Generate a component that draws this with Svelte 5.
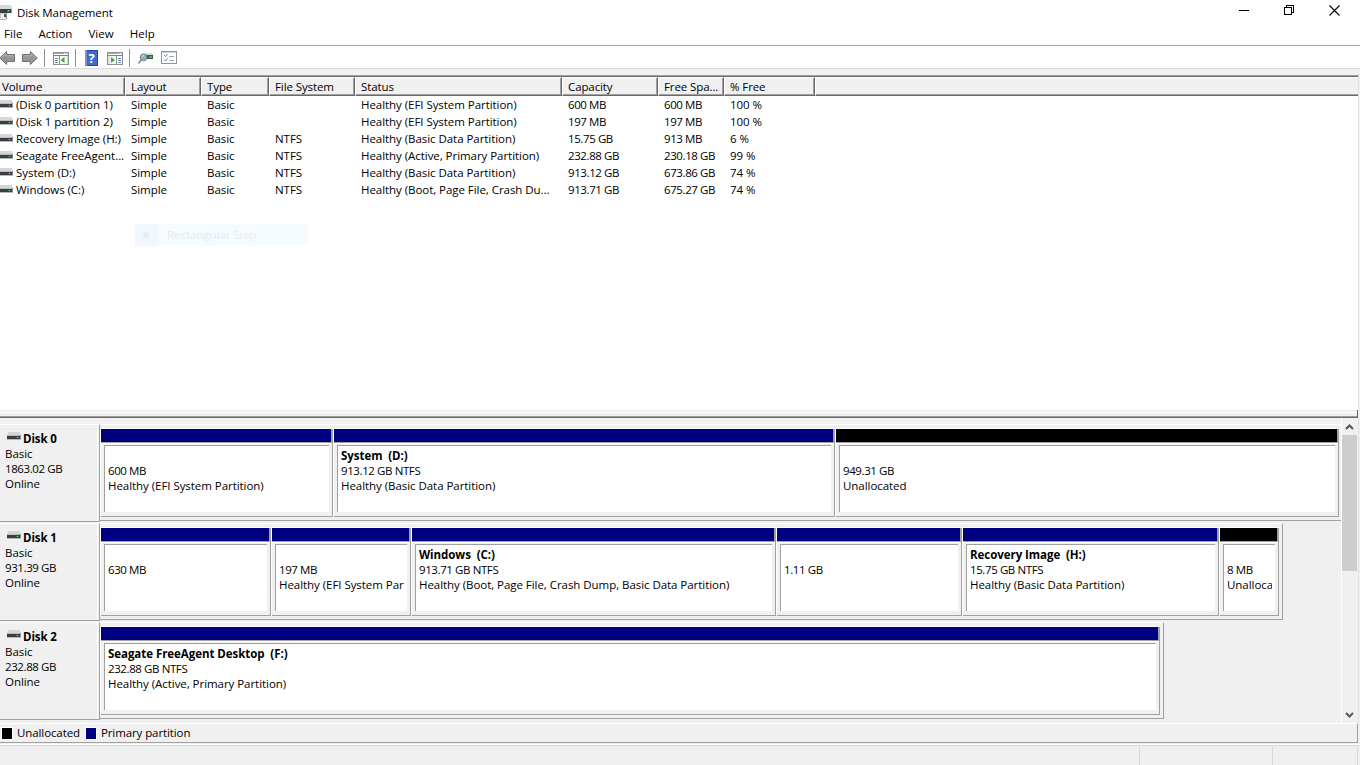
<script lang="ts">
	interface Partition {
		width: number;
		name?: string;
		size: string;
		status?: string;
		unallocated?: boolean;
	}

	interface Disk {
		name: string;
		size: string;
		full?: boolean;
		partitions: Partition[];
	}

	const menus = ['File', 'Action', 'View', 'Help'];

	const columns = ['Volume', 'Layout', 'Type', 'File System', 'Status', 'Capacity', 'Free Spa...', '% Free', ''];

	const volumes = [
		['(Disk 0 partition 1)', 'Simple', 'Basic', '', 'Healthy (EFI System Partition)', '600 MB', '600 MB', '100 %'],
		['(Disk 1 partition 2)', 'Simple', 'Basic', '', 'Healthy (EFI System Partition)', '197 MB', '197 MB', '100 %'],
		['Recovery Image (H:)', 'Simple', 'Basic', 'NTFS', 'Healthy (Basic Data Partition)', '15.75 GB', '913 MB', '6 %'],
		['Seagate FreeAgent...', 'Simple', 'Basic', 'NTFS', 'Healthy (Active, Primary Partition)', '232.88 GB', '230.18 GB', '99 %'],
		['System (D:)', 'Simple', 'Basic', 'NTFS', 'Healthy (Basic Data Partition)', '913.12 GB', '673.86 GB', '74 %'],
		['Windows (C:)', 'Simple', 'Basic', 'NTFS', 'Healthy (Boot, Page File, Crash Du...', '913.71 GB', '675.27 GB', '74 %']
	];

	const disks: Disk[] = [
		{
			name: 'Disk 0',
			size: '1863.02 GB',
			full: true,
			partitions: [
				{ width: 233, size: '600 MB', status: 'Healthy (EFI System Partition)' },
				{ width: 502, name: 'System  (D:)', size: '913.12 GB NTFS', status: 'Healthy (Basic Data Partition)' },
				{ width: 504, size: '949.31 GB', status: 'Unallocated', unallocated: true }
			]
		},
		{
			name: 'Disk 1',
			size: '931.39 GB',
			partitions: [
				{ width: 171, size: '630 MB' },
				{ width: 140, size: '197 MB', status: 'Healthy (EFI System Partition)' },
				{ width: 365, name: 'Windows  (C:)', size: '913.71 GB NTFS', status: 'Healthy (Boot, Page File, Crash Dump, Basic Data Partition)' },
				{ width: 186, size: '1.11 GB' },
				{ width: 257, name: 'Recovery Image  (H:)', size: '15.75 GB NTFS', status: 'Healthy (Basic Data Partition)' },
				{ width: 60, size: '8 MB', status: 'Unallocated', unallocated: true }
			]
		},
		{
			name: 'Disk 2',
			size: '232.88 GB',
			partitions: [
				{ width: 1060, name: 'Seagate FreeAgent Desktop  (F:)', size: '232.88 GB NTFS', status: 'Healthy (Active, Primary Partition)' }
			]
		}
	];
</script>

{#snippet driveIcon()}
	<svg class="drive" width="14" height="8" viewBox="0 0 14 8" shape-rendering="crispEdges">
		<path d="M1 0h12l1 4H0z" fill="#d3d6da" />
		<rect y="3" width="14" height="1" fill="#b9bcc0" />
		<rect y="4" width="14" height="3" fill="#3b3d40" />
		<rect x="13" y="3" width="1" height="4" fill="#8b8e91" />
		<rect y="7" width="14" height="1" fill="#b5b7b9" />
		<rect x="9" y="5" width="3" height="1" fill="#2b7d31" />
		<rect x="10" y="5" width="1" height="1" fill="#3dfb48" />
	</svg>
{/snippet}

<div class="window">
	<header class="titlebar">
		<svg class="app-icon" width="12" height="16" viewBox="0 0 12 16" shape-rendering="crispEdges">
			<path d="M0 1h11l1 4H0z" fill="#d3d6da" />
			<rect y="5" width="12" height="4" fill="#3b3d40" />
			<rect x="11" y="5" width="1" height="4" fill="#8b8e91" />
			<rect x="7" y="6" width="3" height="2" fill="#2b8d31" />
			<rect x="8" y="6" width="1" height="1" fill="#3dfb48" />
			<rect x="0" y="9" width="7" height="5" fill="#c6c6c6" />
			<rect x="1" y="10" width="4" height="5" fill="#efefef" />
			<rect x="4" y="10" width="2" height="3" fill="#555" />
			<rect x="6" y="9" width="1" height="6" fill="#8b8b8b" />
			<rect x="0" y="15" width="6" height="1" fill="#b0b0b0" />
		</svg>
		<span class="title">Disk Management</span>
		<div class="controls">
			<svg width="11" height="11" viewBox="0 0 11 11" shape-rendering="crispEdges">
				<path d="M0 5.5h10" stroke="#000" />
			</svg>
			<svg width="11" height="11" viewBox="0 0 11 11" shape-rendering="crispEdges">
				<path d="M.5 2.5h7v7h-7zM2.5 2.5v-2h7v7h-2" fill="none" stroke="#000" />
			</svg>
			<svg width="11" height="11" viewBox="0 0 11 11">
				<path d="M.5 .5l10 10M10.5 .5l-10 10" stroke="#000" stroke-width="1.1" />
			</svg>
		</div>
	</header>

	<nav class="menubar">
		{#each menus as menu}
			<span>{menu}</span>
		{/each}
	</nav>

	<div class="toolbar">
		<svg class="back" width="17" height="16" viewBox="0 0 17 16">
			<path d="M.7 8l7-6.500v3h7.800v7H7.700v3z" fill="#959595" stroke="#707070" />
			<path d="M2.500 7.500l4-3.700v2h8" fill="none" stroke="#b4b4b4" />
		</svg>
		<svg class="forward" width="17" height="16" viewBox="0 0 17 16">
			<path d="M16.300 8l-7-6.500v3H1.500v7h7.800v3z" fill="#959595" stroke="#707070" />
			<path d="M2.500 5.800h8v-2L14.500 7.500" fill="none" stroke="#b4b4b4" />
		</svg>
		<i class="sep"></i>
		<svg class="tree" width="16" height="16" viewBox="0 0 16 16" shape-rendering="crispEdges">
			<rect x=".5" y="2.500" width="15" height="12" fill="#fafafa" stroke="#8c9299" />
			<path d="M1 3.500h14" stroke="#9ea8b3" />
			<path d="M11 3.500h1M13 3.500h1" stroke="#fff" />
			<path d="M1 5.500h14" stroke="#7a838c" />
			<path d="M6.500 6v8" stroke="#8c9299" />
			<path d="M2 8.500h3M2 10.500h3M2 12.500h3" stroke="#6c8db2" />
			<rect x="14" y="6" width="1" height="8" fill="#ccd0d4" />
			<path d="M11.500 7v6l-4-3z" fill="#3fae2a" shape-rendering="auto" />
		</svg>
		<i class="sep second"></i>
		<svg class="help" width="13" height="16" viewBox="0 0 13 16">
			<rect width="13" height="16" fill="#2546a0" />
			<rect x="2" y="1" width="10" height="14" fill="#4169cc" />
			<rect x="0" y="0" width="2" height="16" fill="#7892d0" />
			<text x="3.500" y="13" class="question">?</text>
		</svg>
		<svg class="action" width="16" height="16" viewBox="0 0 16 16" shape-rendering="crispEdges">
			<rect x=".5" y="2.500" width="15" height="12" fill="#fafafa" stroke="#8c9299" />
			<path d="M1 3.500h14" stroke="#9ea8b3" />
			<path d="M11 3.500h1M13 3.500h1" stroke="#fff" />
			<path d="M1 5.500h14" stroke="#7a838c" />
			<path d="M9.500 6v8" stroke="#8c9299" />
			<path d="M11 8.500h3M11 10.500h3M11 12.500h3" stroke="#6c8db2" />
			<rect x="1" y="6" width="2" height="8" fill="#dfe2e5" />
			<path d="M4 7v6l4-3z" fill="#3fae2a" shape-rendering="auto" />
		</svg>
		<i class="sep third"></i>
		<svg class="rescan" width="16" height="14" viewBox="0 0 16 14">
			<path d="M4 2h10l1 2H3z" fill="#d5d8dc" />
			<rect x="6" y="4" width="9" height="4" fill="#4b4e52" />
			<rect x="11" y="5" width="3" height="2" fill="#16d321" />
			<path d="M3.500 8.500l-3 4" stroke="#8a8f94" stroke-width="1.700" />
			<circle cx="5.500" cy="6.500" r="3.300" fill="#8fb0c5" stroke="#6f8795" />
			<path d="M4 6a2 2 0 012-1.500" fill="none" stroke="#d5e8f2" />
		</svg>
		<svg class="settings" width="16" height="13" viewBox="0 0 16 13" shape-rendering="crispEdges">
			<rect x=".5" y=".5" width="15" height="12" fill="#fff" stroke="#8f959b" />
			<path d="M1 1.500h14" stroke="#d2d5d8" />
			<path d="M8 5.500h5M8 9.500h5" stroke="#a5a9ad" />
			<path d="M3 4l1.500 1.500L6.500 3M3 8.500L4.500 10l2-2.500" fill="none" stroke="#3795dc" shape-rendering="auto" />
		</svg>
	</div>

	<div class="gap"></div>

	<section class="volumes">
		<div class="row head">
			{#each columns as column}
				<div class="th">{column}</div>
			{/each}
		</div>
		{#each volumes as volume}
			<div class="row">
				{#each volume as value, i}
					<div class="td" class:num={i > 4} class:percent={i === 7}>
						{#if i === 0}{@render driveIcon()}{/if}<span>{value}</span>
					</div>
				{/each}
			</div>
		{/each}
		<div class="snip"><i></i><span>Rectangular Snip</span></div>
	</section>

	<div class="splitter"></div>

	<section class="graph">
		<div class="disks">
			{#each disks as disk}
				<div class="disk" class:full={disk.full}>
					<div class="label">
						<div class="disk-name">{@render driveIcon()}<b>{disk.name}</b></div>
						<div>Basic</div>
						<div class="num">{disk.size}</div>
						<div>Online</div>
					</div>
					<div class="frame">
						{#each disk.partitions as part}
							<div class="part" class:unallocated={part.unallocated} style="width: {part.width}px">
								<div class="bar"></div>
								<div class="body">
									<div class="box">
										<b>{part.name ?? ''}</b>
										<div class="num">{part.size}</div>
										<div>{part.status ?? ''}</div>
									</div>
								</div>
							</div>
						{/each}
					</div>
				</div>
			{/each}
		</div>
		<div class="scrollbar">
			<svg width="9" height="6" viewBox="0 0 9 6"><path d="M1 5l3.500-3.500L8 5" /></svg>
			<div class="thumb"></div>
			<svg width="9" height="6" viewBox="0 0 9 6"><path d="M1 1l3.500 3.500L8 1" /></svg>
		</div>
	</section>

	<div class="legend">
		<i class="black"></i><span>Unallocated</span>
		<i></i><span>Primary partition</span>
	</div>

	<footer class="statusbar">
		<div></div>
		<div></div>
		<div></div>
	</footer>
</div>

<style>
	:global(body) {
		margin: 0;
		overflow: hidden;
	}

	.window {
		display: flex;
		flex-direction: column;
		width: 1360px;
		height: 765px;
		overflow: hidden;
		background: #f0f0f0;
		color: #000;
		font: 11.5px/15px 'Open Sans', 'Noto Sans', sans-serif;
		letter-spacing: -0.05px;
		white-space: nowrap;
	}

	svg {
		display: block;
		flex-shrink: 0;
	}

	.num {
		letter-spacing: -0.4px;
	}

	.percent {
		letter-spacing: -0.05px;
	}

	.titlebar {
		display: flex;
		align-items: center;
		height: 24px;
		background: #fff;
	}

	.title {
		margin-left: 5px;
		letter-spacing: -0.08px;
	}

	.controls {
		display: flex;
		gap: 34px;
		margin: -3px 20px 0 auto;
	}

	.menubar {
		display: flex;
		gap: 16px;
		height: 21px;
		padding-left: 4px;
		line-height: 20px;
		letter-spacing: 0.05px;
		background: #fff;
		border-bottom: 1px solid #a8a8ac;
	}

	.toolbar {
		display: flex;
		align-items: center;
		height: 22px;
		background: #fff;
		border-bottom: 1px solid #d9d9d9;
	}

	.toolbar svg {
		margin-top: 2px;
	}

	.sep {
		width: 1px;
		height: 18px;
		margin: 2px 8px 0 6px;
		background: #8d8d8d;
	}

	.toolbar .back {
		margin-left: -1px;
	}

	.forward {
		margin-left: 5px;
	}

	.toolbar .action {
		margin-left: 9px;
	}

	.sep.second {
		margin-right: 9px;
	}

	.question {
		font: bold 13px 'Open Sans', sans-serif;
		fill: #fff;
	}

	.toolbar .settings {
		margin: 0 0 0 7px;
	}

	.gap {
		height: 6px;
	}

	.volumes {
		position: relative;
		flex-shrink: 0;
		width: 1358px;
		height: 334px;
		border-top: 1px solid #a0a0a0;
		background: #fff;
		border-right: 1px solid #e3e3e3;
	}

	.row {
		display: grid;
		grid-template-columns: 125px 76px 68px 86px 207px 96px 66px 91px 1fr;
		height: 17px;
		line-height: 17px;
	}

	.row.head {
		height: 20px;
		box-sizing: border-box;
		border-top: 1px solid #696969;
		background: #f0f0f0;
		letter-spacing: -0.1px;
	}

	.th {
		padding-left: 5px;
		border: 1px solid #fff;
		border-right-color: #696969;
		border-bottom-color: #696969;
		box-shadow: inset -1px -1px #a0a0a0;
	}

	.th:first-child {
		border-left: 0;
		padding-left: 2px;
	}

	.th:last-child {
		border-right: 0;
		box-shadow: inset 0 -1px #a0a0a0;
	}

	.td {
		display: flex;
		align-items: center;
		padding-left: 6px;
		overflow: hidden;
	}

	.td:first-child {
		gap: 3px;
		padding-left: 0;
	}

	.td:first-child .drive {
		align-self: flex-start;
		margin: 4px 0 0 -1px;
	}

	.snip {
		position: absolute;
		left: 135px;
		top: 148px;
		display: flex;
		align-items: center;
		width: 173px;
		height: 22px;
		line-height: 18px;
		background: linear-gradient(90deg, #f0f7ff 22px, #f7fbff 22px, #f7fbff 27px, #f5fbff 27px);
		color: #e9ebed;
	}

	.snip i {
		width: 6px;
		height: 6px;
		margin: 0 18px 0 8px;
		border-radius: 50%;
		background: #e9ebed;
	}

	.splitter {
		flex-shrink: 0;
		height: 8px;
		box-sizing: border-box;
		width: 1358px;
		border-bottom: 1px solid #696969;
		border-right: 1px solid #696969;
		background: linear-gradient(#f0f0f0 2px, #fff 2px, #fff 3px, #f0f0f0 3px, #f0f0f0 6px, #a0a0a0 6px);
	}

	.graph {
		display: flex;
		flex-shrink: 0;
		height: 305px;
		width: 1358px;
		border-right: 1px solid #e3e3e3;
	}

	.disks {
		width: 1341px;
		padding-top: 6px;
		box-sizing: border-box;
	}

	.disk {
		display: flex;
		height: 99px;
	}

	.label {
		width: 100px;
		height: 98px;
		box-sizing: border-box;
		padding: 6px 0 0 5px;
		border-top: 1px solid #fff;
		border-right: 1px solid #a0a0a0;
		border-bottom: 1px solid #a0a0a0;
		box-shadow: inset -1px 0 #f0f0f0, inset -2px 0 #fff;
	}

	.disk-name {
		display: flex;
		gap: 2px;
		padding-left: 2px;
	}

	.disk-name .drive {
		margin-top: 1px;
	}

	.frame {
		display: flex;
		height: 97px;
		box-sizing: border-box;
		padding: 4px 3px 3px 0;
		border: solid;
		border-width: 1px 1px 1px 0;
		border-color: #fff #a0a0a0 #a0a0a0;
	}

	.full .frame {
		width: 1241px;
		border-right: 0;
	}

	.part {
		display: flex;
		flex-direction: column;
		flex-shrink: 0;
		box-sizing: border-box;
		border-left: 1px solid #fff;
	}

	.bar {
		height: 13px;
		background: #000080;
		border-right: 2px solid #a0a0a0;
		box-shadow: 0 -1px #fff;
	}

	.unallocated .bar {
		background: #000;
	}

	.body {
		flex: 1;
		border: solid #a0a0a0;
		border-width: 1px 1px 1px 0;
		box-shadow: inset 0 1px #fff;
		padding: 2px 3px 3px 3px;
	}

	.box {
		height: 67px;
		box-sizing: border-box;
		overflow: hidden;
		padding: 2px 3px 0;
		border-left: 1px solid #a0a0a0;
		border-top: 1px solid #a0a0a0;
		background: #fff;
	}

	.box div {
		overflow: hidden;
	}

	.box b {
		display: block;
		height: 15px;
	}

	b {
		font-weight: 700;
		letter-spacing: -0.05px;
		white-space: pre;
	}

	.disk-name b {
		letter-spacing: -0.1px;
	}

	.scrollbar {
		display: flex;
		flex-direction: column;
		align-items: center;
		width: 15px;
		padding: 6px 0 5px;
		border-left: 1px solid #fff;
		box-sizing: content-box;
	}

	.scrollbar path {
		fill: none;
		stroke: #555;
		stroke-width: 2;
	}

	.thumb {
		width: 15px;
		height: 136px;
		margin: 5px 0 auto;
		background: #cdcdcd;
	}

	.legend {
		display: flex;
		align-items: center;
		flex-shrink: 0;
		width: 1358px;
		height: 20px;
		box-sizing: border-box;
		letter-spacing: -0.1px;
		border: solid;
		border-width: 1px 1px 1px 0;
		border-color: #fff #a0a0a0 #a0a0a0;
	}

	.legend span {
		margin-top: -2px;
	}

	.legend i {
		width: 10px;
		height: 11px;
		margin: 0 5px 0 6px;
		background: #000080;
		outline: 1px solid #fff;
	}

	.legend .black {
		margin-left: 2px;
		background: #000;
	}

	.statusbar {
		display: flex;
		height: 21px;
		box-sizing: border-box;
		margin-top: 1px;
		padding-top: 1px;
		border-top: 1px solid #fff;
		box-shadow: inset 0 1px #d7d7d7;
	}

	.statusbar div {
		width: 1139px;
		margin-top: 1px;
		border-right: 1px solid #d7d7d7;
	}

	.statusbar div:nth-child(2) {
		width: 132px;
	}

	.statusbar div:nth-child(3) {
		width: 84px;
	}
</style>
